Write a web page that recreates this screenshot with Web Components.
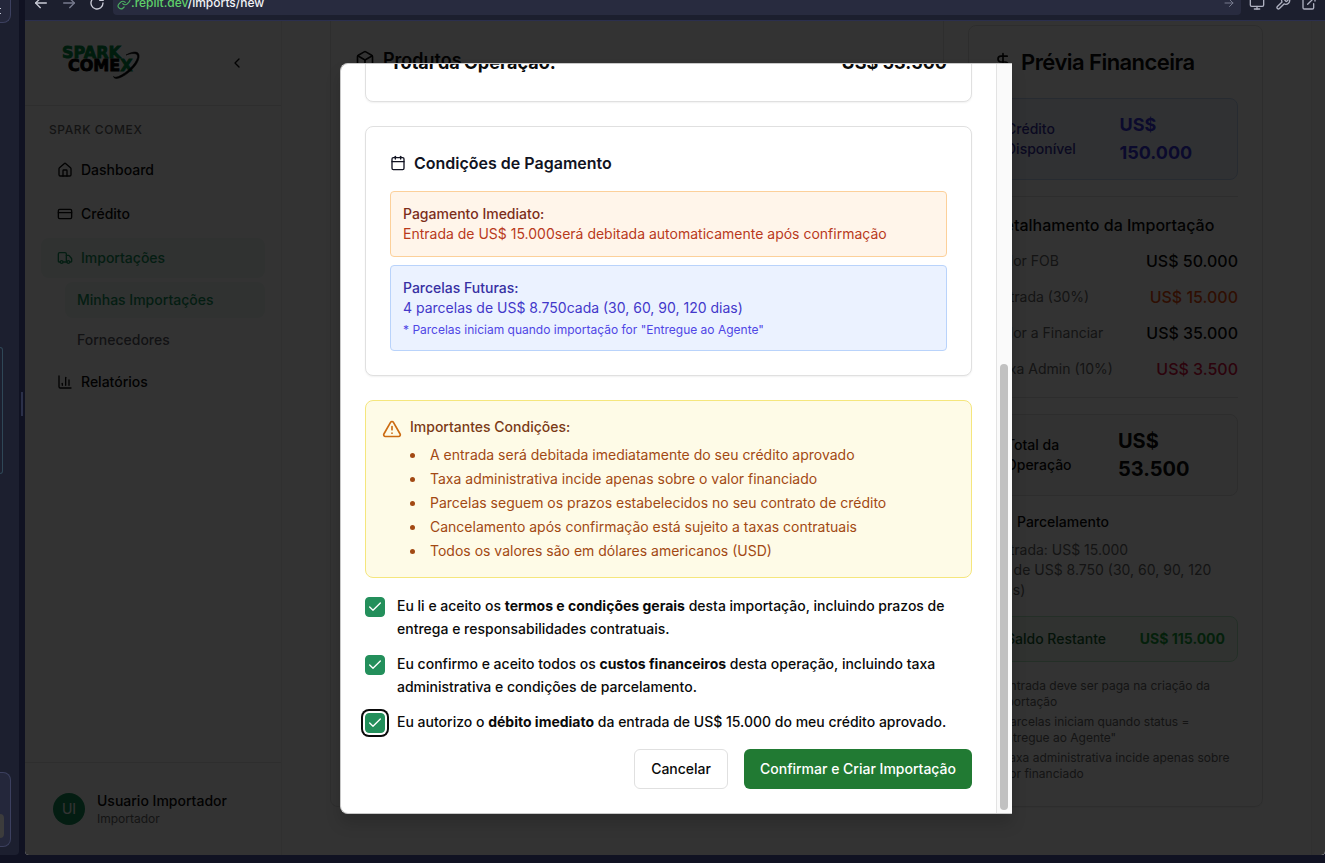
<!DOCTYPE html>
<html lang="pt-BR">
<head>
<meta charset="utf-8">
<meta name="viewport" content="width=device-width, initial-scale=1">
<title>Spark Comex – Nova Importação</title>
<style>
  html, body { margin: 0; height: 100%; }
  body {
    font-family: Inter, "Liberation Sans", sans-serif;
    font-size: 14px; line-height: 20px;
    background: #101222; overflow: hidden;
  }
</style>
</head>
<body>
<workspace-shell>
  <editor-strip slot="editor"></editor-strip>
  <browser-bar slot="bar"></browser-bar>
  <import-page slot="page"></import-page>
</workspace-shell>

<script>
const ICONS = {
  'house': '<path d="M15 21v-8a1 1 0 0 0-1-1h-4a1 1 0 0 0-1 1v8"/><path d="M3 10a2 2 0 0 1 .709-1.528l7-5.999a2 2 0 0 1 2.582 0l7 5.999A2 2 0 0 1 21 10v9a2 2 0 0 1-2 2H5a2 2 0 0 1-2-2z"/>',
  'card': '<rect width="20" height="14" x="2" y="5" rx="2"/><path d="M2 10h20"/>',
  'truck': '<path d="M14 18V6a2 2 0 0 0-2-2H4a2 2 0 0 0-2 2v11a1 1 0 0 0 1 1h2"/><path d="M15 18H9"/><path d="M19 18h2a1 1 0 0 0 1-1v-3.65a1 1 0 0 0-.22-.624l-3.48-4.35A1 1 0 0 0 17.52 8H14"/><circle cx="17" cy="18" r="2"/><circle cx="7" cy="18" r="2"/>',
  'chart': '<path d="M3 3v16a2 2 0 0 0 2 2h16"/><path d="M18 17V9"/><path d="M13 17V5"/><path d="M8 17v-3"/>',
  'chevron-left': '<path d="m15 18-6-6 6-6"/>',
  'package': '<path d="M11 21.73a2 2 0 0 0 2 0l7-4A2 2 0 0 0 21 16V8a2 2 0 0 0-1-1.73l-7-4a2 2 0 0 0-2 0l-7 4A2 2 0 0 0 3 8v8a2 2 0 0 0 1 1.73z"/><path d="M12 22V12"/><path d="m3.3 7 8.7 5 8.7-5"/>',
  'dollar': '<path d="M12 2v20"/><path d="M17 5H9.5a3.5 3.5 0 0 0 0 7h5a3.5 3.5 0 0 1 0 7H6"/>',
  'calendar': '<path d="M8 2v4"/><path d="M16 2v4"/><rect width="18" height="18" x="3" y="4" rx="2"/><path d="M3 10h18"/>',
  'alert': '<path d="m21.73 18-8-14a2 2 0 0 0-3.48 0l-8 14A2 2 0 0 0 4 21h16a2 2 0 0 0 1.73-3"/><path d="M12 9v4"/><path d="M12 17h.01"/>',
  'check': '<path d="M20 6 9 17l-5-5"/>',
  'arrow-left': '<path d="m11 5-7 7 7 7"/><path d="M20 12H4"/>',
  'arrow-right': '<path d="m13 5 7 7-7 7"/><path d="M20 12H4"/>',
  'refresh': '<path d="M21 12a9 9 0 1 1-3-6.7L21 8"/><path d="M21 3v5h-5"/>',
  'link': '<path d="M10 13a5 5 0 0 0 7.54.54l3-3a5 5 0 0 0-7.07-7.07l-1.72 1.71"/><path d="M14 11a5 5 0 0 0-7.54-.54l-3 3a5 5 0 0 0 7.07 7.07l1.71-1.71"/>',
  'monitor': '<rect width="20" height="14" x="2" y="3" rx="2"/><path d="M8 21h8"/><path d="M12 17v4"/>',
  'wrench': '<path d="M14.7 6.3a1 1 0 0 0 0 1.4l1.6 1.6a1 1 0 0 0 1.4 0l3.77-3.77a6 6 0 0 1-7.94 7.94l-6.91 6.91a2.12 2.12 0 0 1-3-3l6.91-6.91a6 6 0 0 1 7.94-7.94z"/>',
  'external': '<path d="M15 3h6v6"/><path d="M10 14 21 3"/><path d="M19 13v6a2 2 0 0 1-2 2H5a2 2 0 0 1-2-2V7a2 2 0 0 1 2-2h6"/>'
};

function define(name, render) {
  customElements.define(name, class extends HTMLElement {
    constructor() { super(); this.attachShadow({ mode: 'open' }); }
    connectedCallback() {
      if (this.shadowRoot.childNodes.length) return;
      const t = document.createElement('template');
      t.innerHTML = '<style>*{box-sizing:border-box}</style>' + render(this);
      this.shadowRoot.append(t.content.cloneNode(true));
    }
  });
}

define('ui-icon', el => {
  const size = el.getAttribute('size') || 16;
  return `<style>:host{display:block;flex:none;width:${size}px;height:${size}px}svg{display:block}</style>
  <svg width="${size}" height="${size}" viewBox="0 0 24 24" fill="none" stroke="currentColor"
    stroke-width="${el.getAttribute('stroke') || 2}" stroke-linecap="round" stroke-linejoin="round" aria-hidden="true">${ICONS[el.getAttribute('name')]}</svg>`;
});

define('workspace-shell', () => `
  <style>
    :host { display: grid; grid-template-columns: 19px 6px minmax(0, 1fr); height: 100%; padding-bottom: 8px; box-sizing: border-box; }
    .gutter { display: grid; place-items: center; padding-bottom: 48px; }
    .gutter i { width: 2px; height: 24px; background: #2b3049; }
    .window { display: grid; grid-template-rows: 21px minmax(0, 1fr); min-height: 0; }
    ::slotted(*) { min-height: 0; }
  </style>
  <slot name="editor"></slot>
  <div class="gutter"><i></i></div>
  <div class="window"><slot name="bar"></slot><slot name="page"></slot></div>`);

define('editor-strip', () => `
  <style>
    :host { display: flex; flex-direction: column; background: #1c1f2f; border-radius: 0 0 4px 0; overflow: hidden; padding-bottom: 8px; }
    div { border: 1px solid #3c405f; border-left: 0; background: #24273b; }
    .tab { height: 23px; width: 11px; border-top: 0; border-radius: 0 0 8px 0; display: grid; gap: 4px; align-content: center; }
    .tab i { width: 1px; height: 1px; background: #c5c8d8; }
    .panel { height: 127px; width: 3px; margin-top: 324px; background: none; border-color: #2f4757; border-radius: 0 6px 6px 0; }
    .box { height: 75px; width: 11px; margin-top: auto; border-radius: 0 8px 8px 0; display: flex; align-items: flex-end; padding-bottom: 8px; }
    .box i { width: 4px; height: 24px; border-radius: 0 4px 4px 0; background: #3c3c3c; }
  </style>
  <div class="tab"><i></i><i></i></div>
  <div class="panel"></div>
  <div class="box"><i></i></div>`);

define('browser-bar', () => `
  <style>
    :host { display: flex; align-items: flex-end; gap: 8px; padding: 0 8px 5px; background: #1c1f2e; border-bottom: 1px solid #2b2f4e; color: #c9cbd6; box-sizing: border-box; }
    .nav, .tools { display: flex; align-items: center; height: 24px; flex: none; }
    .nav { gap: 12px; }
    .tools { gap: 10px; color: #aeb1c0; }
    button { all: unset; display: block; }
    .dim { color: #777b8e; }
    .address { flex: 1; display: flex; align-items: center; height: 24px; padding: 0 6px 0 4px; background: #282b3f; border-radius: 4px; font-size: 12px; font-weight: 500; color: #f1f2f6; }
    .address span { flex: 1; }
    b { font-weight: 500; color: #5fd06a; }
    .lk { color: #4caf62; }
  </style>
  <div class="nav">
    <button aria-label="Voltar"><ui-icon name="arrow-left"></ui-icon></button>
    <button class="dim" aria-label="Avançar"><ui-icon name="arrow-right"></ui-icon></button>
    <button aria-label="Recarregar"><ui-icon name="refresh"></ui-icon></button>
  </div>
  <div class="address"><ui-icon class="lk" name="link" size="14"></ui-icon><span><b>.replit.dev</b>/imports/new</span><ui-icon class="dim" name="arrow-right" size="12"></ui-icon></div>
  <div class="tools">
    <button aria-label="Dispositivos"><ui-icon name="monitor"></ui-icon></button>
    <button aria-label="Ferramentas"><ui-icon name="wrench"></ui-icon></button>
    <button aria-label="Abrir em nova aba"><ui-icon name="external"></ui-icon></button>
  </div>`);

define('import-page', () => `
  <style>
    :host { display: grid; grid-template-columns: 257px minmax(0, 1fr) 14px; position: relative; overflow: hidden; background: #fff; border-radius: 0 0 4px 4px; color: #0a0a0a; }
    main { display: grid; grid-template-columns: minmax(0, 1fr) 295px; gap: 24px; align-items: stretch; align-content: start; padding: 0 48px; }
    .products { border: 1px solid #e5e5e5; border-top: 0; border-radius: 0 0 8px 8px; padding: 27px 24px; }
    h2 { margin: 0; display: flex; align-items: center; gap: 8px; font-size: 18px; line-height: 24px; font-weight: 600; }
    .track { background: #fafafa; border-left: 1px solid #f0f0f0; }
    .overlay { position: absolute; inset: 0; background: rgba(0,0,0,.8); display: grid; justify-items: center; padding: 42px 0 41px 2px; }
    finance-preview { margin-top: 4px; }
  </style>
  <side-nav></side-nav>
  <main>
    <section class="products"><h2><ui-icon name="package" size="20"></ui-icon>Produtos</h2></section>
    <finance-preview></finance-preview>
  </main>
  <div class="track"></div>
  <div class="overlay"><confirm-dialog></confirm-dialog></div>`);

define('brand-logo', () => `
  <style>:host{display:block}svg{display:block}text{font-family:"DejaVu Sans",Inter,sans-serif;font-weight:700;font-size:16px}</style>
  <svg width="84" height="36" viewBox="0 0 84 36" role="img" aria-label="Spark Comex">
    <text x="1" y="13" fill="#008a44" stroke="#008a44" stroke-width=".8">SPARK</text>
    <text x="7" y="26" fill="#050505" stroke="#050505" stroke-width=".8">COME<tspan fill="#008a44" stroke="#008a44">X</tspan></text>
    <path d="M65 10c8-4.500 14-4 13 2.500-1 8-12 18-20 20.500-3 1-5 .5-5.500-1.500 1 1 3 .8 5 0C65 28.500 75 19 76.500 12.500 77.500 8 72 7.500 65 10z" fill="#050505" stroke="#050505" stroke-width=".6"/>
  </svg>`);

define('nav-link', el => `
  <style>
    :host { display: block; }
    a { display: flex; align-items: center; gap: 8px; height: 40px; padding: 0 16px; border-radius: 8px; color: #0a0a0a; font-weight: 500; text-decoration: none; }
    :host([sub]) { padding-left: 24px; }
    :host([sub]) a { height: 36px; padding: 0 12px; color: #5c5c66; }
    :host([active]) a { color: #15935c; background: #eef8f3; }
  </style>
  <a href="#">${el.hasAttribute('icon') ? `<ui-icon name="${el.getAttribute('icon')}"></ui-icon>` : ''}<slot></slot></a>`);

define('side-nav', () => `
  <style>
    :host { display: flex; flex-direction: column; border-right: 1px solid #eee; box-sizing: border-box; min-height: 0; }
    header { display: flex; align-items: center; justify-content: space-between; height: 85px; padding: 0 36px; border-bottom: 1px solid #e5e5e5; }
    button { all: unset; display: block; }
    h3 { margin: 0 8px 8px; font-size: 12px; line-height: 16px; font-weight: 500; letter-spacing: .05em; color: #666; }
    nav { display: flex; flex-direction: column; gap: 4px; padding: 16px; flex: 1; }
    footer { display: flex; align-items: center; gap: 12px; padding: 28px; border-top: 1px solid #e5e5e5; }
    .avatar { display: grid; place-items: center; width: 32px; height: 32px; border-radius: 50%; background: #16925c; color: #fff; }
    strong { display: block; font-weight: 500; }
    small { display: block; font-size: 12px; line-height: 16px; color: #666; }
  </style>
  <header><brand-logo></brand-logo><button aria-label="Recolher menu"><ui-icon name="chevron-left"></ui-icon></button></header>
  <nav>
    <h3>SPARK COMEX</h3>
    <nav-link icon="house">Dashboard</nav-link>
    <nav-link icon="card">Crédito</nav-link>
    <nav-link icon="truck" active>Importações</nav-link>
    <nav-link sub active>Minhas Importações</nav-link>
    <nav-link sub>Fornecedores</nav-link>
    <nav-link icon="chart">Relatórios</nav-link>
  </nav>
  <footer><span class="avatar">UI</span><div><strong>Usuario Importador</strong><small>Importador</small></div></footer>`);

define('finance-preview', () => `
  <style>
    :host { display: flex; flex-direction: column; gap: 16px; border: 1px solid #e0e0e0; border-radius: 8px; padding: 24px; box-sizing: border-box; box-shadow: 0 1px 2px rgba(0,0,0,.05); }
    h2 { margin: 0 0 8px; display: flex; align-items: center; gap: 8px; font-size: 22px; line-height: 24px; font-weight: 600; letter-spacing: -.025em; white-space: nowrap; }
    hr { margin: 0; border: 0; border-top: 1px solid #dedede; }
    .box { display: flex; justify-content: space-between; align-items: center; padding: 12px; border: 1px solid #dedede; border-radius: 8px; font-weight: 500; }
    .box b { font-size: 18px; line-height: 28px; font-weight: 700; }
    .credit { background: #edf4fc; border-color: #c3d8f5; color: #3730a3; }
    .credit b { color: #3b35e0; }
    .total { background: #fafafa; }
    .total b { font-size: 20px; }
    .left { background: #eefaf1; border-color: #b5ecc4; color: #14602d; }
    .left b { font-size: 14px; line-height: 20px; color: #16a038; }
    .detail { display: flex; flex-direction: column; gap: 12px; line-height: 24px; }
    h3, h4 { margin: 0; font-weight: 500; }
    h3 { font-size: 16px; }
    .row { display: flex; justify-content: space-between; color: #666; }
    .row b { font-size: 16px; font-weight: 500; color: #0a0a0a; }
    .row .o { color: #ea4a0c; }
    .row .r { color: #dc1040; }
    h4 { display: flex; align-items: center; gap: 8px; font-size: 14px; margin-bottom: 8px; }
    p { margin: 0; }
    .plan p { color: #666; }
    .notes { display: flex; flex-direction: column; gap: 4px; font-size: 12px; line-height: 16px; color: #666; }
  </style>
  <h2><ui-icon name="dollar" size="20"></ui-icon>Prévia Financeira</h2>
  <div class="box credit"><span>Crédito Disponível</span><b>US$ 150.000</b></div>
  <hr>
  <div class="detail">
    <h3>Detalhamento da Importação</h3>
    <div class="row"><span>Valor FOB</span><b>US$ 50.000</b></div>
    <div class="row"><span>Entrada (30%)</span><b class="o">US$ 15.000</b></div>
    <div class="row"><span>Valor a Financiar</span><b>US$ 35.000</b></div>
    <div class="row"><span>Taxa Admin (10%)</span><b class="r">US$ 3.500</b></div>
  </div>
  <hr>
  <div class="box total"><span>Total da Operação</span><b>US$ 53.500</b></div>
  <div class="plan"><h4><ui-icon name="calendar"></ui-icon>Parcelamento</h4><p>Entrada: US$ 15.000</p><p>4x de US$ 8.750 (30, 60, 90, 120 dias)</p></div>
  <div class="box left"><span>Saldo Restante</span><b>US$ 115.000</b></div>
  <div class="notes"><p>* Entrada deve ser paga na criação da importação</p><p>* Parcelas iniciam quando status = "Entregue ao Agente"</p><p>* Taxa administrativa incide apenas sobre valor financiado</p></div>`);

define('info-card', () => `
  <style>:host{display:block;padding:24px;border:1px solid #e0e0e0;border-radius:8px;background:#fff;box-shadow:0 1px 2px rgba(0,0,0,.06);box-sizing:border-box}</style><slot></slot>`);

define('notice-box', () => `
  <style>
    :host { display: block; padding: 12px; border: 1px solid #fcd09a; border-radius: 4px; background: #fff5ea; color: #b93a1c; box-sizing: border-box; }
    :host([tone=blue]) { background: #ebf2ff; border-color: #b9d3fb; color: #4338ca; }
    strong { display: block; font-weight: 500; color: #7c2d1a; }
    :host([tone=blue]) strong { color: #3730a3; }
    ::slotted(small) { display: block; margin-top: 4px; font-size: 12px; line-height: 16px; color: #4f46e5; }
  </style><strong><slot name="title"></slot></strong><slot></slot>`);

define('terms-check', () => `
  <style>
    :host { display: block; }
    label { display: flex; gap: 12px; align-items: flex-start; line-height: 23px; font-weight: 500; }
    .tick { display: grid; flex: none; margin-top: 3px; color: #fff; place-items: center; }
    .tick > * { grid-area: 1 / 1; }
    ui-icon { pointer-events: none; }
    input { appearance: none; margin: 0; width: 20px; height: 20px; border: 1px solid #238f5b; border-radius: 4px; }
    input:checked { background: #238f5b; }
    input:not(:checked) + ui-icon { visibility: hidden; }
    :host([ring]) input { box-shadow: 0 0 0 2px #fff, 0 0 0 4px #0a0a0a; }
  </style>
  <label><span class="tick"><input type="checkbox" checked><ui-icon name="check"></ui-icon></span><span><slot></slot></span></label>`);

define('ui-button', () => `
  <style>
    :host { display: block; }
    button { display: block; height: 40px; padding: 0 16px; border: 1px solid #e0e0e0; border-radius: 6px; background: #fff; color: #0a0a0a; font: inherit; font-weight: 500; }
    :host([primary]) button { border: 0; background: #217a33; color: #fff; }
  </style><button type="button"><slot></slot></button>`);

define('confirm-dialog', () => `
  <style>
    :host { display: grid; grid-template-columns: minmax(0, 1fr) 16px; grid-template-rows: minmax(0, 1fr); width: 100%; max-width: 672px; min-height: 0; box-sizing: border-box; background: #fff; border: 1px solid #c8c8c8; border-right: 0; border-radius: 8px 0 0 8px; box-shadow: 0 10px 15px rgba(0,0,0,.15); }
    .scroll { display: flex; flex-direction: column; justify-content: flex-end; min-height: 0; overflow: hidden; border-radius: 8px 0 0 8px; }
    .body { display: flex; flex-direction: column; gap: 24px; padding: 24px; }
    .bar { display: flex; flex-direction: column; justify-content: flex-end; align-items: flex-start; border-left: 1px solid #e3e3e3; background: #fafafa; padding: 3px; min-height: 0; }
    .bar i { width: 8px; height: 60%; border-radius: 4px; background: #c1c1c1; }
    .sum { display: flex; justify-content: space-between; font-size: 18px; line-height: 28px; font-weight: 700; }
    h3 { display: flex; align-items: center; gap: 8px; margin: 0 0 16px; font-size: 16px; line-height: 24px; font-weight: 600; color: #111322; }
    notice-box + notice-box { margin-top: 8px; }
    .alert { display: flex; gap: 8px; padding: 16px; border: 1px solid #f5e67d; border-radius: 8px; background: #fefbe7; color: #a24913; }
    .alert ui-icon { margin-top: 2px; color: #cc6b12; }
    h4 { margin: 0 0 8px; font-size: 14px; font-weight: 500; color: #7a3a16; }
    ul { margin: 0; padding: 0; list-style: none; display: flex; flex-direction: column; gap: 4px; }
    li { display: flex; align-items: center; gap: 15px; }
    li::before { content: ""; flex: none; width: 5px; height: 5px; border-radius: 50%; background: currentColor; }
    .form { display: flex; flex-direction: column; gap: 16px; margin-top: -8px; }
    .checks { display: flex; flex-direction: column; gap: 12px; }
    .actions { display: flex; justify-content: flex-end; gap: 16px; }
    b { font-weight: 700; }
  </style>
  <div class="scroll" role="dialog" aria-label="Confirmar importação">
    <div class="body">
      <info-card><div class="sum"><span>Total da Operação:</span><span>US$ 53.500</span></div></info-card>
      <info-card>
        <h3><ui-icon name="calendar"></ui-icon>Condições de Pagamento</h3>
        <notice-box><span slot="title">Pagamento Imediato:</span>Entrada de US$ 15.000será debitada automaticamente após confirmação</notice-box>
        <notice-box tone="blue"><span slot="title">Parcelas Futuras:</span>4 parcelas de US$ 8.750cada (30, 60, 90, 120 dias)<small>* Parcelas iniciam quando importação for "Entregue ao Agente"</small></notice-box>
      </info-card>
      <section class="alert">
        <ui-icon name="alert" size="20"></ui-icon>
        <div>
          <h4>Importantes Condições:</h4>
          <ul>
            <li>A entrada será debitada imediatamente do seu crédito aprovado</li>
            <li>Taxa administrativa incide apenas sobre o valor financiado</li>
            <li>Parcelas seguem os prazos estabelecidos no seu contrato de crédito</li>
            <li>Cancelamento após confirmação está sujeito a taxas contratuais</li>
            <li>Todos os valores são em dólares americanos (USD)</li>
          </ul>
        </div>
      </section>
      <div class="form">
        <div class="checks">
          <terms-check>Eu li e aceito os <b>termos e condições gerais</b> desta importação, incluindo prazos de entrega e responsabilidades contratuais.</terms-check>
          <terms-check>Eu confirmo e aceito todos os <b>custos financeiros</b> desta operação, incluindo taxa administrativa e condições de parcelamento.</terms-check>
          <terms-check ring>Eu autorizo o <b>débito imediato</b> da entrada de US$ 15.000 do meu crédito aprovado.</terms-check>
        </div>
        <div class="actions"><ui-button>Cancelar</ui-button><ui-button primary>Confirmar e Criar Importação</ui-button></div>
      </div>
    </div>
  </div>
  <div class="bar"><i></i></div>`);
</script>
</body>
</html>
